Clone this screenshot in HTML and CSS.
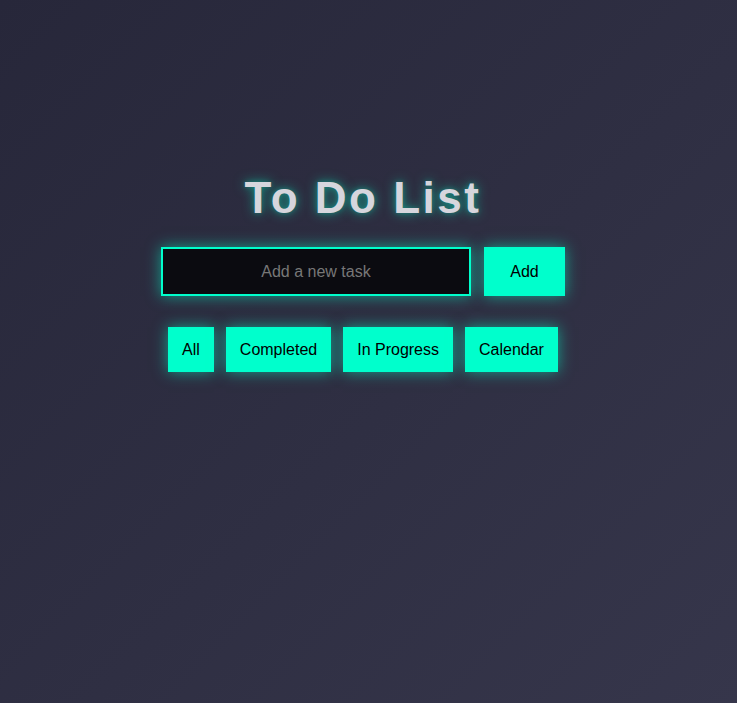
FILE: index.html
```html
<!DOCTYPE html>
<html lang="en">
<head>
<meta charset="utf-8">
<title>To Do List</title>
<link rel="stylesheet" href="styles.css">
</head>
<body>
<main class="app">
  <h1 class="title">To Do List</h1>
  <div class="add-row">
    <input class="task-input" type="text" placeholder="Add a new task">
    <button class="btn add-btn">Add</button>
  </div>
  <div class="filters">
    <button class="btn filter-btn">All</button>
    <button class="btn filter-btn">Completed</button>
    <button class="btn filter-btn">In Progress</button>
    <button class="btn filter-btn">Calendar</button>
  </div>
</main>
</body>
</html>
```
FILE: styles.css
```css
html, body {
  margin: 0;
  padding: 0;
  height: 100%;
}
body {
  background: linear-gradient(135deg, #27273a 0%, #2f2f43 55%, #36364b 100%);
  font-family: "Liberation Sans", Arial, sans-serif;
  overflow: hidden;
}
.app {
  display: flex;
  flex-direction: column;
  align-items: center;
  padding-top: 173px;
  padding-right: 11px;
}
.title {
  margin: 0;
  font-size: 44px;
  font-weight: bold;
  letter-spacing: 2.5px;
  color: #d6d6dd;
  text-shadow: 0 0 12px rgba(0, 255, 204, 0.5), 0 0 5px rgba(0, 255, 204, 0.25);
}
.add-row {
  display: flex;
  gap: 13px;
  margin-top: 24px;
}
.task-input {
  box-sizing: border-box;
  width: 310px;
  height: 49px;
  border: 2px solid #00ffcc;
  background: #0b0b10;
  color: #ddd;
  font-family: "Liberation Sans", Arial, sans-serif;
  font-size: 16px;
  text-align: center;
  outline: none;
  padding: 0 10px;
  box-shadow: 0 0 14px rgba(0, 255, 204, 0.55);
}
.task-input::placeholder {
  color: #777;
}
.btn {
  border: none;
  background: #00ffcc;
  color: #000;
  font-family: "Liberation Sans", Arial, sans-serif;
  font-size: 16px;
  cursor: pointer;
  box-shadow: 0 0 14px rgba(0, 255, 204, 0.55);
}
.add-btn {
  height: 49px;
  width: 81px;
  padding: 0;
}
.filters {
  display: flex;
  gap: 12px;
  margin-top: 31px;
}
.filter-btn {
  height: 45px;
  padding: 0 14px;
}
```
